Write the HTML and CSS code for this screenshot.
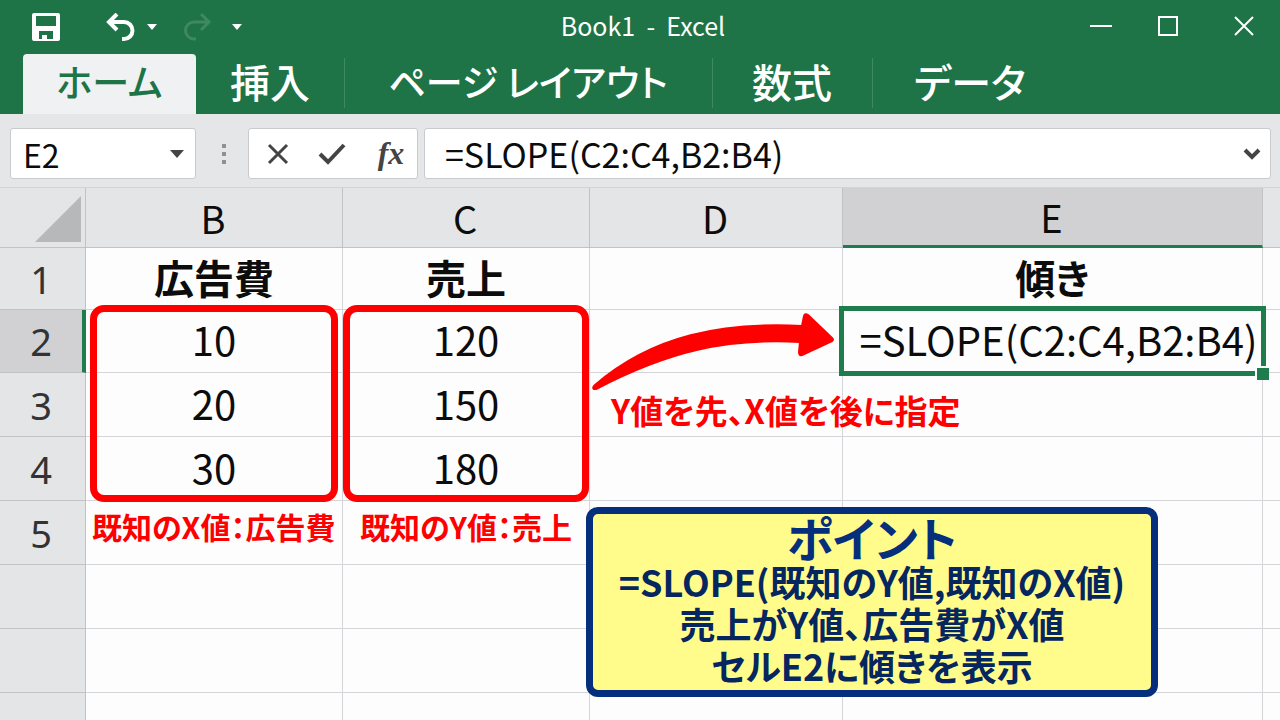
FILE: index.html
```html
<!DOCTYPE html>
<html lang="ja">
<head>
<meta charset="utf-8">
<meta name="viewport" content="width=device-width, initial-scale=1">
<title>Book1 - Excel</title>
<link rel="stylesheet" href="styles.css">
</head>
<body>

<!-- title bar + ribbon tabs -->
<header class="ribbon">
	<div class="titlebar">
		<div class="quick">
			<button class="icon-btn save" aria-label="上書き保存">
				<svg width="28" height="28" viewBox="0 0 28 28"><path fill="#fff" fill-rule="evenodd" d="M2 0h24a2 2 0 0 1 2 2v24a2 2 0 0 1-2 2H2a2 2 0 0 1-2-2V2a2 2 0 0 1 2-2zM4 3v10h20V3zM7 18v8h3v-4h5v4h6v-8z"/><path fill="#fff" d="M12 22h3v4h-3z"/></svg>
			</button>
			<button class="icon-btn undo" aria-label="元に戻す">
				<svg width="29" height="28" viewBox="0 0 29 28" fill="none" stroke="#fff" stroke-width="4"><path d="M11 1L3 9l8 8M3 9h15a8 8 0 0 1 0 17h-2"/></svg>
			</button>
			<button class="icon-btn drop" aria-label="元に戻す一覧"><svg width="10" height="6"><path fill="#fff" d="M0 0h10L5 6z"/></svg></button>
			<button class="icon-btn redo" aria-label="やり直し">
				<svg width="29" height="28" viewBox="0 0 29 28" fill="none" stroke="#3f8860" stroke-width="3"><path d="M18 1l8 8-8 8M26 9H11a8 8 0 0 0 0 17h2"/></svg>
			</button>
			<button class="icon-btn drop" aria-label="カスタマイズ"><svg width="10" height="6"><path fill="#fff" d="M0 0h10L5 6z"/></svg></button>
		</div>
		<div class="book">Book1&nbsp; -&nbsp; Excel</div>
		<div class="winbtns">
			<button class="icon-btn" aria-label="最小化"><svg width="22" height="20" stroke="#fff" stroke-width="2"><path d="M0 10h22"/></svg></button>
			<button class="icon-btn" aria-label="最大化"><svg width="20" height="20" fill="none" stroke="#fff" stroke-width="2"><path d="M1 1h18v18H1z"/></svg></button>
			<button class="icon-btn close" aria-label="閉じる"><svg width="20" height="20" stroke="#fff" stroke-width="2"><path d="M1 1l18 18M19 1L1 19"/></svg></button>
		</div>
	</div>
	<nav class="tabs">
		<button class="tab home">ホーム</button>
		<button class="tab insert">挿入</button>
		<button class="tab layout">ページ レイアウト</button>
		<button class="tab formulas">数式</button>
		<button class="tab data">データ</button>
	</nav>
</header>

<!-- formula bar -->
<div class="fbar">
	<div class="box namebox">
		<input class="name-input" aria-label="名前ボックス" value="E2">
		<button class="icon-btn" aria-label="名前一覧"><svg width="14" height="8"><path fill="#444" d="M0 0h14L7 8z"/></svg></button>
	</div>
	<div class="dots"><i></i><i></i><i></i></div>
	<div class="box fbtns">
		<button class="icon-btn" aria-label="キャンセル"><svg width="22" height="22" stroke="#444" stroke-width="3"><path d="M2 2l18 18M20 2L2 20"/></svg></button>
		<button class="icon-btn" aria-label="入力"><svg width="28" height="22" fill="none" stroke="#444" stroke-width="4"><path d="M2 11l8 8L26 2"/></svg></button>
		<button class="icon-btn fx" aria-label="関数の挿入">fx</button>
	</div>
	<div class="box formula">
		<input class="formula-input" aria-label="数式バー" value="=SLOPE(C2:C4,B2:B4)">
		<button class="icon-btn" aria-label="数式バーの展開"><svg width="18" height="12" fill="none" stroke="#444" stroke-width="4"><path d="M2 2l7 7 7-7"/></svg></button>
	</div>
</div>

<!-- worksheet -->
<main class="sheet">
	<table class="grid">
		<colgroup><col class="c-num"><col class="c-b"><col class="c-c"><col class="c-d"><col class="c-e"><col></colgroup>
		<thead>
			<tr><th class="corner"><svg width="46" height="46"><path fill="#b7b8ba" d="M46 0v46H0z"/></svg></th><th>B</th><th>C</th><th>D</th><th class="active">E</th><th></th></tr>
		</thead>
		<tbody>
			<tr class="row1"><th>1</th><td class="label">広告費</td><td class="label">売上</td><td></td><td class="label">傾き</td><td></td></tr>
			<tr class="row2"><th class="active">2</th><td>10</td><td>120</td><td></td><td class="selected">=SLOPE(C2:C4,B2:B4)<span class="handle"></span></td><td></td></tr>
			<tr><th>3</th><td>20</td><td>150</td><td></td><td></td><td></td></tr>
			<tr><th>4</th><td>30</td><td>180</td><td></td><td></td><td></td></tr>
			<tr><th>5</th><td></td><td></td><td></td><td></td><td></td></tr>
			<tr><th></th><td></td><td></td><td></td><td></td><td></td></tr>
			<tr><th></th><td></td><td></td><td></td><td></td><td></td></tr>
			<tr><th></th><td></td><td></td><td></td><td></td><td></td></tr>
		</tbody>
	</table>

	<!-- notes drawn over the cells -->
	<div class="frame frame-x"></div>
	<div class="frame frame-y"></div>
	<div class="note note-x">既知のX値：広告費</div>
	<div class="note note-y">既知のY値：売上</div>
	<svg class="arrow" width="246" height="84" viewBox="0 0 246 84"><path fill="#f00" stroke="#f00" stroke-width="2" stroke-linejoin="round" d="M3 80Q1 79 4 76C62 26 132 13 211 17L213 7Q214 4 217 6L241 29Q243 31 241 32L211 46Q208 47 208 43L209 33C135 29 78 42 5 80Z"/></svg>
	<div class="note note-order">Y値を先、X値を後に指定</div>
	<section class="point">
		<h2>ポイント</h2>
		<p>=SLOPE(既知のY値,既知のX値)</p>
		<p>売上がY値、広告費がX値</p>
		<p>セルE2に傾きを表示</p>
	</section>
</main>

</body>
</html>
```
FILE: styles.css
```css
* {box-sizing:border-box;}

body {
	margin:0; height:100vh; display:flex; flex-direction:column; overflow:hidden;
	background:#e5e6e8; color:#0c0c0c;
	font-family:"Noto Sans CJK JP", sans-serif;
}
button, input {font-family:inherit; color:inherit; border:0; background:none; padding:0;}
.icon-btn {display:flex; align-items:center; justify-content:center; flex:none;}

/* ribbon */
.ribbon {background:#1e7446; color:#fff;}
.titlebar {display:grid; grid-template-columns:1fr auto 1fr; align-items:center; height:54px; padding:0 26px 2px 32px;}
.quick {display:flex; align-items:center; padding-top:2px;}
.undo {margin-left:46px;}
.redo {margin-left:26px;}
.drop {margin-left:12px;}
.redo + .drop {margin-left:20px;}
.book {font-size:25px; line-height:48px; padding-bottom:2px;}
.winbtns {display:flex; justify-content:flex-end; gap:46px;}
.close {margin-left:10px;}

.tabs {display:flex; height:60px; padding-left:23px;}
.tab {
	position:relative; font-size:40px; font-weight:500; line-height:52px; white-space:nowrap;
	padding-bottom:6px; font-feature-settings:"palt";
}
.home {width:173px; background:#f0f1f3; color:#1e7446; border-radius:4px 4px 0 0;}
.insert {width:148px;}
.layout {width:368px;}
.home, .layout {font-size:37px;}
.formulas {width:160px;}
.data {width:196px;}
.layout::before, .formulas::before, .data::before {
	content:""; position:absolute; left:0; top:4px; width:1px; height:50px; background:#3f8860;
}

/* formula bar */
.fbar {display:flex; height:74px; padding:14px 9px 8px 10px; border-bottom:1px solid #d3d4d6;}
.box {display:flex; align-items:center; background:#fff; border:1px solid #c9cacd; border-radius:3px;}
.namebox {width:186px; padding:0 11px 0 12px;}
.name-input {flex:1; min-width:0; font-size:32px; line-height:48px; height:48px;}
.dots {display:flex; flex-direction:column; align-items:center; justify-content:center; gap:4px; width:52px; padding-left:4px;}
.dots i {width:4px; height:4px; background:#909194;}
.fbtns {width:170px; padding:0 10px 0 18px; justify-content:space-between; margin-right:6px;}
.fx {font-family:"Liberation Serif", serif; font-style:italic; font-weight:700; font-size:32px; color:#444; width:32px;}
.formula {flex:1; padding:0 9px 0 20px;}
.formula-input {flex:1; min-width:0; font-size:34px; line-height:48px; height:48px;}

/* worksheet */
.sheet {position:relative; flex:1; overflow:hidden; background:#fdfdfd;}
.grid {width:100%; table-layout:fixed; border-collapse:separate; border-spacing:0;}
.c-num {width:86px;}
.c-b {width:257px;}
.c-c {width:247px;}
.c-d {width:253px;}
.c-e {width:420px;}
.grid th, .grid td {
	height:64px; padding:0; text-align:center; font-size:40px; line-height:56px;
	border-right:1px solid #d3d5d8; border-bottom:1px solid #d3d5d8;
}
.grid td {padding-bottom:4px;}
.grid th {background:#e4e5e7; font-size:38px; font-weight:400; border-color:#c0c2c5;}
.grid th:last-child, .grid td:last-child {border-right:0;}
.grid thead th {height:60px; padding-right:2px;}
.grid .row1 > * {height:62px;}
.grid .row2 > * {height:63px;}
.grid tbody th {font-family:"Noto Sans", sans-serif; color:#333; padding-right:3px;}
.grid .corner {vertical-align:bottom; line-height:0; padding:0 4px 5px 0; text-align:right;}
.grid th.active {background:#d1d1d3;}
.grid thead th.active {border-bottom:3px solid #1f7d4d;}
.grid tbody th.active {border-right:4px solid #1f7d4d; padding-right:0;}
.grid .label {font-weight:700; font-feature-settings:"palt";}
.grid .selected {position:relative; padding-left:12px; white-space:nowrap;}
.selected::before {content:""; position:absolute; inset:-4px; border:5px solid #1f7d4d;}
.handle {position:absolute; right:-7px; bottom:-8px; width:14px; height:14px; background:#1f7d4d; border:solid #fdfdfd; border-width:2px 0 0 2px;}

/* notes */
.frame {position:absolute; top:117px; height:197px; border:7px solid #f00; border-radius:14px;}
.frame-x {left:90px; width:248px;}
.frame-y {left:343px; width:246px;}
.note {
	position:absolute; color:#f00; font-weight:700; font-size:30px; line-height:40px;
	white-space:nowrap; font-feature-settings:"palt";
}
.note-x {left:92px; top:318px;}
.note-y {left:360px; top:318px;}
.note-order {left:611px; top:202px; font-size:33px;}
.arrow {position:absolute; left:591px; top:121px;}
.point {
	position:absolute; left:586px; top:319px; width:572px; padding-bottom:4px;
	border:7px solid #052f7c; border-radius:12px; background:#fffc8b; color:#06265f;
	text-align:center; font-weight:700; white-space:nowrap; font-feature-settings:"palt";
}
.point h2 {margin:0; font-size:47px; line-height:46px; color:#052f7c;}
.point p {margin:0; font-size:36px; line-height:42px;}
```
